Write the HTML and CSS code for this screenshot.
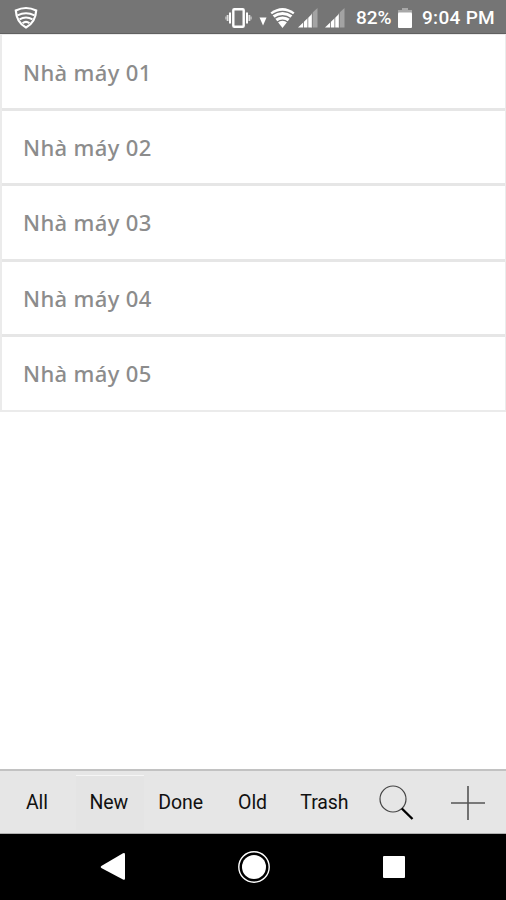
FILE: index.html
```html
<!DOCTYPE html>
<html lang="vi">
<head>
    <meta charset="UTF-8">
    <meta name="viewport" content="width=device-width, initial-scale=1.0">
    <title>Nhà máy</title>
    <link rel="stylesheet" href="styles.css">
</head>
<body>

    <!-- status bar -->
    <header class="status-bar">
        <svg class="shield" width="24" height="24" viewBox="0 0 24 24" fill="none" stroke="#fff">
            <path stroke-width="2.200" d="M1.800 4.500Q12 -.5 22.200 4.500Q21.500 16.500 12 21.500Q2.500 16.500 1.800 4.500Z"/>
            <path stroke-width="2" d="M3.500 9.300Q12 5.300 20.500 9.300M5.500 13.300Q12 9.700 18.500 13.300M8.500 17.200Q12 14.500 15.500 17.200"/>
        </svg>
        <svg class="vibrate" width="27" height="22" viewBox="0 0 27 22" fill="none" stroke="#fff">
            <rect x="8.300" y="2.300" width="10.400" height="17.400" rx="1" stroke-width="2.400"/>
            <path stroke-width="2" d="M5 5.500V16.500M22 5.500V16.500"/>
            <path stroke-width="1.800" d="M2.600 8V14M24.400 8V14" opacity=".75"/>
            <path stroke-width="1.200" d="M.9 9.500V12.500M26.100 9.500V12.500" opacity=".6"/>
        </svg>
        <svg class="data" width="8" height="9" viewBox="0 0 8 9" fill="#fff">
            <path d="M.5 .5H7.500L4 8.500Z"/>
        </svg>
        <svg class="wifi" width="26" height="22" viewBox="0 0 26 22">
            <path fill="#fff" d="M.5 5.500Q12.500 -3.500 24.500 5.500L12.500 21Z"/>
            <path fill="none" stroke="#757575" stroke-width="1.300" d="M1.500 8.200Q12.500 .5 23.500 8.200M4 11.800Q12.500 5.700 21 11.800M7 15.300Q12.500 11 18 15.300"/>
        </svg>
        <svg class="signal" width="20" height="20" viewBox="0 0 20 20">
            <path fill="#a3a3a3" d="M13 6L19.500 0V19.500H13Z"/>
            <path fill="#fff" d="M0 19.500L14 6V19.500Z"/>
            <path stroke="#757575" stroke-width=".8" d="M5.500 12V20M9.800 8V20M14.300 4V20"/>
        </svg>
        <svg class="signal second" width="20" height="20" viewBox="0 0 20 20">
            <path fill="#a3a3a3" d="M13 6L19.500 0V19.500H13Z"/>
            <path fill="#fff" d="M0 19.500L14 6V19.500Z"/>
            <path stroke="#757575" stroke-width=".8" d="M5.500 12V20M9.800 8V20M14.300 4V20"/>
        </svg>
        <span class="percent">82%</span>
        <svg class="battery" width="14" height="22" viewBox="0 0 14 22">
            <path fill="#a8a8a8" d="M4 1H10V3H14V6H0V3H4Z"/>
            <rect y="5.500" width="14" height="15.500" rx="1" fill="#fff"/>
        </svg>
        <span class="time">9:04 PM</span>
    </header>

    <!-- factory list -->
    <main class="content">
        <ul class="list">
            <li class="item">Nhà máy 01</li>
            <li class="item">Nhà máy 02</li>
            <li class="item">Nhà máy 03</li>
            <li class="item">Nhà máy 04</li>
            <li class="item">Nhà máy 05</li>
        </ul>
    </main>

    <!-- filter tabs -->
    <nav class="tabs">
        <button type="button" class="tab">All</button>
        <button type="button" class="tab active">New</button>
        <button type="button" class="tab">Done</button>
        <button type="button" class="tab">Old</button>
        <button type="button" class="tab">Trash</button>
        <button type="button" class="tab" aria-label="Search">
            <svg width="36" height="36" viewBox="0 0 36 36" fill="none">
                <circle cx="15" cy="14" r="13" stroke="#444" stroke-width="1.200"/>
                <path d="M23.800 23.500L34.500 34" stroke="#000" stroke-width="2.400"/>
            </svg>
        </button>
        <button type="button" class="tab" aria-label="Add">
            <svg width="34" height="34" viewBox="0 0 34 34" fill="none">
                <path d="M17 0V34M0 17H34" stroke="#555" stroke-width="1.600"/>
            </svg>
        </button>
    </nav>

    <!-- system navigation -->
    <footer class="nav-bar">
        <svg width="26" height="30" viewBox="0 0 26 30" fill="#fff">
            <path d="M1.300 14L23 1.300Q25 .5 25 2.500V26.500Q25 28.500 23 27.500L1.300 16Q0 15 1.300 14Z"/>
        </svg>
        <svg class="home" width="34" height="34" viewBox="0 0 34 34">
            <circle cx="17" cy="17" r="15.200" fill="none" stroke="#fff" stroke-width="1.400"/>
            <circle cx="17" cy="17" r="12" fill="#fff"/>
        </svg>
        <svg width="22" height="22" viewBox="0 0 22 22" fill="#fff">
            <rect width="22" height="22" rx="1"/>
        </svg>
    </footer>

</body>
</html>
```

FILE: styles.css
```css
*{
    margin: 0;
    padding: 0;
    box-sizing: border-box;
}
body{
    display: flex;
    flex-direction: column;
    height: 100vh;
    background: #fff;
    font-family: Roboto, sans-serif;
    overflow: hidden;
}
svg{
    display: block;
    flex: none;
}

/* status bar */
.status-bar{
    display: flex;
    align-items: center;
    height: 34px;
    padding: 2px 0 0 14px;
    background: #757575;
    border-bottom: 1px solid #606060;
    color: #fff;
    font-size: 19px;
    font-weight: 500;
    white-space: nowrap;
}
.vibrate{
    margin-left: 187px;
}
.data{
    margin: 8px 0 0 7px;
}
.wifi{
    margin-left: 3px;
}
.signal{
    margin-left: 2px;
}
.second{
    margin-left: 7px;
}
.percent{
    width: 42px;
    margin-left: 11px;
}
.time{
    margin-left: 10px;
    letter-spacing: .3px;
}

/* list */
.content{
    flex: 1;
}
.list{
    padding-top: .6px;
    list-style: none;
    border: 2px solid #ebebeb;
    border-width: 1px 1px 2px 2px;
}
.item{
    display: flex;
    align-items: center;
    height: 75.4px;
    padding: 0 0 .5px 21px;
    border-bottom: 3px solid #e6e6e6;
    color: #8c8c8c;
    font-family: "Noto Sans", sans-serif;
    font-size: 22px;
    font-weight: 500;
    letter-spacing: .35px;
}
.item:last-child{
    height: 73px;
    border-bottom: none;
}

/* tabs */
.tabs{
    display: grid;
    grid-template-columns: repeat(7, 1fr);
    height: 65px;
    padding: 4px 2px 3px 1px;
    background: #e6e6e6;
    border-top: 2px solid #c2c2c2;
    border-bottom: 1px solid #b0b0b0;
}
.tab{
    display: flex;
    align-items: center;
    justify-content: center;
    min-width: 0;
    border: none;
    background: none;
    color: #111;
    font-family: Roboto, sans-serif;
    font-size: 19.5px;
    letter-spacing: -.1px;
}
.active{
    margin: 0 1px 0 3px;
    padding: 0 2px 1px 0;
    background: #e4e4e4;
    border-top: 1px solid #f5f5f5;
}

/* navigation */
.nav-bar{
    display: flex;
    align-items: center;
    justify-content: space-between;
    height: 66px;
    padding: 0 101px 0 100px;
    background: #000;
}
.home{
    margin-right: 2px;
}
```
